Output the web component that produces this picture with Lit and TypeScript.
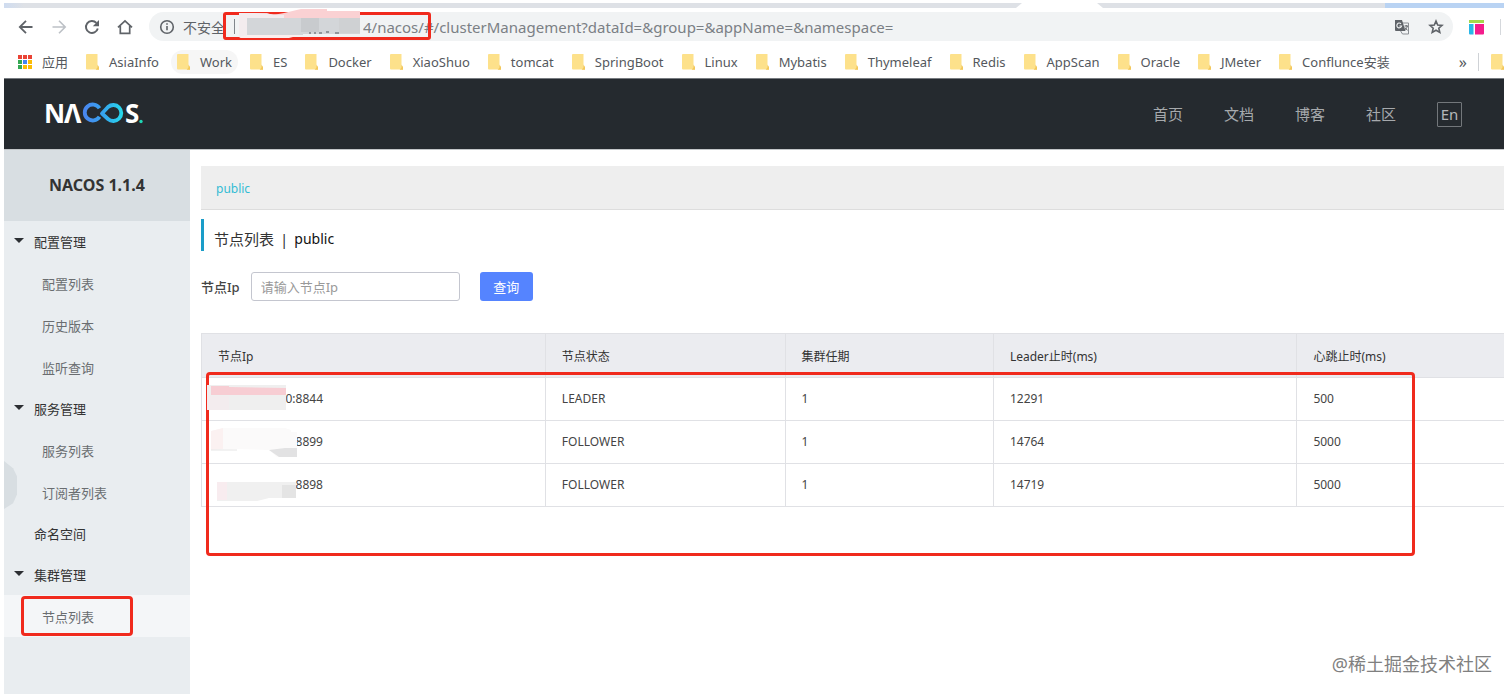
import { LitElement, html, css, svg } from "lit";
import { customElement, state } from "lit/decorators.js";

const BOOKMARKS = [
  "AsiaInfo", "Work", "ES", "Docker", "XiaoShuo", "tomcat", "SpringBoot", "Linux",
  "Mybatis", "Thymeleaf", "Redis", "AppScan", "Oracle", "JMeter", "Conflunce安装",
];

const MENU = [
  { label: "配置管理", items: ["配置列表", "历史版本", "监听查询"] },
  { label: "服务管理", items: ["服务列表", "订阅者列表"] },
  { label: "命名空间", items: [] },
  { label: "集群管理", items: ["节点列表"] },
];

const NODES = [
  { ip: "0:8844", state: "LEADER", term: 1, leader: 12291, beat: 500 },
  { ip: "8899", state: "FOLLOWER", term: 1, leader: 14764, beat: 5000 },
  { ip: "8898", state: "FOLLOWER", term: 1, leader: 14719, beat: 5000 },
];

const FONT = css`"Noto Sans", "Noto Sans CJK SC", sans-serif`;

@customElement("browser-bar")
class BrowserBar extends LitElement {
  static styles = css`
    :host { display: block; background: #fff; font-family: ${FONT}; color: #5f6368; }
    .tabs { display: flex; height: 5px; }
    .tab-left { flex: 1018; background: linear-gradient(90deg, #cfdcf0, #dee1e6 20px);
      clip-path: polygon(0 0, 100% 0, calc(100% - 6px) 100%, 0 100%); }
    .tab-open { flex: 75; }
    .tab-right { flex: 288; background: #dee1e6; clip-path: polygon(0 0, 100% 0, 100% 100%, 6px 100%); }
    .tab-end { flex: 119; background: #b9d3f3; }
    .tools { display: flex; align-items: center; height: 37px; padding-left: 13px; }
    .icon { display: block; width: 18px; height: 18px; flex: none; }
    .nav { border: 0; padding: 0; background: none; color: #5f6368; width: 18px; height: 18px; margin-right: 15px; }
    .nav.off { color: #bdc1c6; }
    .field { position: relative; flex: 1; display: flex; align-items: center; height: 29px; min-width: 0;
      border-radius: 15px; background: #f1f3f4; padding: 0 8px 0 9px; }
    .unsafe { font-size: 14px; margin-left: 7px; white-space: nowrap; }
    .sep { width: 1px; height: 15px; background: #80868b; margin-left: 9px; }
    .url { flex: 1; min-width: 0; margin-left: 128px; border: 0; padding: 0; background: none; outline: 0;
      font: 15px/24px ${FONT}; color: #7b8085; }
    .field-btn { border: 0; background: none; padding: 0; color: #5f6368; margin-left: 16px; }
    .mark { position: absolute; left: 74px; top: 0; width: 202px; height: 22px; border: 3px solid #f02a1d; border-radius: 3px; }
    .smudge { position: absolute; left: 90px; top: -3px; width: 124px; height: 31px; }
    .ext { border: 0; background: none; padding: 0; margin: 0 14px 0 15px; }
    .ext-sep { width: 1px; height: 16px; background: #d5d8dc; margin-right: 3px; }
    .marks { display: flex; align-items: center; height: 33px; padding: 0 0 0 14px; overflow: hidden; border-bottom: 1px solid #777b80; }
    .bm { display: flex; align-items: center; text-decoration: none; color: #54585d; font-size: 13px; line-height: 20px;
      white-space: nowrap; margin-right: 18px; gap: 10px; }
    .bm.hot { background: #f6f6f6; border-radius: 12px; padding: 2px 6px; margin-left: -6px; margin-right: 12px; }
    .folder { display: block; width: 13px; height: 16px; flex: none; }
    .more { border: 0; background: none; padding: 0; margin-left: auto; font: 16px/20px ${FONT}; color: #54585d; }
    .more-sep { width: 1px; height: 18px; background: #cfd2d6; margin: 0 12px 0 11px; flex: none; }
  `;

  folder() {
    return html`<svg class="folder" viewBox="0 0 13 16"><path d="M1 0h10.500v11.500l1.500 2.500v1.500H1a1 1 0 0 1-1-1V1a1 1 0 0 1 1-1z" fill="#fde18b"/><path d="M11.500 10.500v3l-1.800 2.200H13V13z" fill="#f3c85c"/></svg>`;
  }

  render() {
    const colors = ["#ea4335", "#ea4335", "#ea4335", "#34a853", "#4285f4", "#fbbc05", "#34a853", "#fbbc05", "#fbbc05"];
    return html`
      <div class="tabs"><div class="tab-left"></div><div class="tab-open"></div><div class="tab-right"></div><div class="tab-end"></div></div>
      <div class="tools">
        <button class="nav" aria-label="后退"><svg class="icon" viewBox="0 0 18 18" fill="none" stroke="currentColor" stroke-width="1.800"><path d="M15.500 9H3M9 2.800L2.800 9 9 15.200"/></svg></button>
        <button class="nav off" aria-label="前进"><svg class="icon" viewBox="0 0 18 18" fill="none" stroke="currentColor" stroke-width="1.600"><path d="M2.500 9H15M9 2.800L15.200 9 9 15.200"/></svg></button>
        <button class="nav" aria-label="刷新"><svg class="icon" viewBox="0 0 18 18" fill="none" stroke="currentColor" stroke-width="1.900"><path d="M14.800 10.500A6 6 0 1 1 13.400 4.900"/><path d="M16 2v6.200H9.800z" fill="currentColor" stroke="none"/></svg></button>
        <button class="nav" aria-label="主页"><svg class="icon" viewBox="0 0 18 18" fill="none" stroke="currentColor" stroke-width="1.700"><path d="M2 9.400L9 2.800l7 6.600M4.300 8v7.300h9.400V8"/></svg></button>
        <div class="field">
          <svg class="icon" viewBox="0 0 18 18" fill="none" stroke="#5f6368" stroke-width="1.600"><circle cx="9" cy="9" r="6.300"/><path d="M9 8v4.300M9 5.200v1.600"/></svg>
          <span class="unsafe">不安全</span><span class="sep"></span>
          <input class="url" aria-label="地址" .value=${"4/nacos/#/clusterManagement?dataId=&group=&appName=&namespace="}>
          <button class="field-btn" aria-label="翻译"><svg class="icon" viewBox="0 0 18 18"><path d="M7 5h8.500v11H9.500L7 12z" fill="#f1f3f4" stroke="#8b8f94"/><path d="M2 2h7l3.500 11H3a1 1 0 0 1-1-1z" fill="#5f6368"/><path d="M8 5.800A2.400 2.400 0 1 0 8.600 8H6.400" fill="none" stroke="#f1f3f4" stroke-width="1.100"/><path d="M11.500 8h3.500M13.200 7v1M14.300 8c-.3 2-1.500 3-2.300 3.800M12 9.500c.6 1.400 1.500 2 2.600 2.700" fill="none" stroke="#5f6368"/></svg></button>
          <button class="field-btn" aria-label="收藏"><svg class="icon" viewBox="0 0 18 18"><path d="M9 3l1.700 4 4.300.4-3.200 2.800 1 4.200L9 12.200l-3.800 2.200 1-4.200L3 7.400 7.300 7z" fill="none" stroke="#5f6368" stroke-width="1.600"/></svg></button>
          <div class="mark"></div>
          <svg class="smudge" viewBox="0 0 124 31"><path d="M0 4H28L34 6 45 4 62 0H88V2H121V24H0z" fill="#fad1d3"/><path d="M0 4H16L45 6V26H8L0 28z" fill="#f3ecee"/><path d="M8 9H121V25H64V26H8z" fill="#d3d6d9"/><path d="M62 9h18v14H62z" fill="#c8cbce"/><path d="M100 9h21v15h-21z" fill="#cfd1d3"/><path d="M3 27L13 26H62L50 29H0z" fill="#fbeeee"/><path d="M70 24h2m3 0h2m3 0h3m4-1h3m6 1h4" stroke="#7b8085" stroke-width="1.500"/></svg>
        </div>
        <button class="ext" aria-label="扩展程序"><svg class="icon" viewBox="0 0 18 18"><path d="M1 2h15v3H1z" fill="#a5d84a"/><path d="M1 6h4.500v10.500H2a1 1 0 0 1-1-1z" fill="#29b6e8"/><path d="M7 6h9v9.500a1 1 0 0 1-1 1H7z" fill="#f41c8c"/></svg></button>
        <span class="ext-sep"></span>
      </div>
      <nav class="marks">
        <a class="bm" href="#"><svg width="14" height="14" viewBox="0 0 14 14">${colors.map((c, i) => svg`<rect x=${(i % 3) * 5} y=${Math.floor(i / 3) * 5} width="4" height="4" fill=${c}/>`)}</svg>应用</a>
        ${BOOKMARKS.map((b) => html`<a class="bm ${b === "Work" ? "hot" : ""}" href="#">${this.folder()}${b}</a>`)}
        <button class="more" aria-label="更多书签">»</button><span class="more-sep"></span>${this.folder()}
      </nav>`;
  }
}

@customElement("site-header")
class SiteHeader extends LitElement {
  static styles = css`
    :host { display: flex; align-items: center; justify-content: space-between; height: 70px; padding: 0 42px 0 38px;
      background: #252a2f; font-family: ${FONT}; }
    .logo { display: block; width: 104px; height: 48px; }
    .logo-text { font: 700 26px "Noto Sans", sans-serif; fill: #fff; }
    .links { display: flex; align-items: center; gap: 41px; }
    .link { color: #a6a9ac; text-decoration: none; font-size: 15px; line-height: 24px; }
    .lang { box-sizing: border-box; width: 25px; height: 25px; padding: 0; border: 1px solid #73777b; border-radius: 1px; background: none;
      color: #b4b7ba; font: 15px/22px ${FONT}; }
  `;
  render() {
    return html`
      <svg class="logo" viewBox="0 -10 104 48" role="img" aria-label="NACOS.">
        <defs><linearGradient id="g" gradientUnits="userSpaceOnUse" x1="42" y1="0" x2="82" y2="0"><stop offset="0" stop-color="#4a86f0"/><stop offset=".5" stop-color="#35a5ee"/><stop offset="1" stop-color="#25dcea"/></linearGradient></defs>
        <text class="logo-text" x="2" y="23">N</text>
        <text class="logo-text" x="22" y="23">Λ</text>
        <path d="M57.500 17.300A8 8 0 1 1 57.500 8.700M60 14L66 7.500A8 8 0 1 1 66 19.500z" transform="translate(0 -.5)" fill="none" stroke="url(#g)" stroke-width="3.800" stroke-linejoin="round"/>
        <text class="logo-text" x="83" y="23">S</text>
        <circle cx="99" cy="21.500" r="1.700" fill="#1fd6b5"/>
      </svg>
      <nav class="links">
        ${["首页", "文档", "博客", "社区"].map((t) => html`<a class="link" href="#">${t}</a>`)}
        <button class="lang">En</button>
      </nav>`;
  }
}

@customElement("side-menu")
class SideMenu extends LitElement {
  static styles = css`
    :host { display: block; position: relative; background: #e9edf0; font-family: ${FONT}; color: #333; }
    .title { margin: 0; height: 71px; background: #d8dee2; font-size: 16px; font-weight: 700; line-height: 70px; text-align: center; }
    .list { list-style: none; margin: 0; padding: 0; }
    .parent { display: flex; align-items: center; height: 41px; color: #333; font-size: 13px; text-decoration: none; }
    .arrow { width: 10px; height: 5px; margin: 0 10px 2px; flex: none; background: #2c2f33; clip-path: polygon(0 0, 100% 0, 50% 100%); }
    .arrow.none { visibility: hidden; }
    .child { position: relative; display: flex; align-items: center; height: 42px; padding-left: 38px; color: #6a6d70; font-size: 13px; text-decoration: none; }
    .child.on { background: #f4f6f8; }
    .mark { position: absolute; left: 17px; top: 1px; width: 106px; height: 34px; border: 3px solid #f02a1d; border-radius: 4px; }
    .handle { position: absolute; left: 0; top: 311px; width: 13px; height: 48px; border: 0; padding: 0; background: #d8dee2;
      clip-path: polygon(0 0, 70% 15%, 100% 32%, 100% 70%, 70% 88%, 0 100%); }
  `;
  render() {
    return html`
      <h1 class="title">NACOS 1.1.4</h1>
      <ul class="list">
        ${MENU.map((m) => html`<li>
          <a class="parent" href="#"><span class="arrow ${m.items.length ? "" : "none"}"></span>${m.label}</a>
          <ul class="list">${m.items.map((t) => html`<li><a class="child ${t === "节点列表" ? "on" : ""}" href="#">${t}${t === "节点列表" ? html`<span class="mark"></span>` : ""}</a></li>`)}</ul>
        </li>`)}
      </ul>
      <button class="handle" aria-label="收起菜单"></button>`;
  }
}

@customElement("node-list")
class NodeTable extends LitElement {
  @state() keyword = "";
  static styles = css`
    :host { display: block; padding: 16px 0 0 11px; font-family: ${FONT}; color: #444; min-width: 0; }
    .space { background: #eee; border-bottom: 1px solid #ddd; height: 43px; padding-left: 15px; line-height: 46px; font-size: 12px; }
    .space-link { color: #33bcd4; text-decoration: none; }
    .heading { display: flex; gap: 6px; margin: 9px 0 21px; border-left: 3px solid #1a9dc9; padding: 4px 0 0 10px; height: 28px;
      font-size: 15px; font-weight: 400; line-height: 32px; color: #333; }
    .ns { font-size: 14px; color: #111; }
    .form { display: flex; align-items: center; height: 29px; margin-bottom: 32px; font-size: 13px; }
    .label { font-weight: 500; margin-right: 11px; color: #444; }
    .input { box-sizing: border-box; width: 209px; height: 29px; padding: 0 9px; border: 1px solid #c4c6cf; border-radius: 3px;
      font: 13px/20px ${FONT}; color: #333; outline: 0; }
    .input::placeholder { color: #999; }
    .submit { width: 53px; height: 29px; margin-left: 20px; padding: 0; border: 0; border-radius: 3px; background: #5584ff; color: #fff; font: 13px/20px ${FONT}; }
    .wrap { position: relative; }
    .table { width: 100%; table-layout: fixed; border-collapse: collapse; font-size: 12px; line-height: 20px; text-align: left; }
    .th, .td { box-sizing: border-box; border: 1px solid #e0e1e5; padding: 0 0 0 16px; }
    .th { height: 44px; padding-top: 2px; background: #ebecf0; font-weight: 400; color: #333; }
    .td { height: 43px; }
    .th:last-child, .td:last-child { border-right: 0; }
    .w1 { width: 26.4%; } .w2 { width: 18.4%; } .w3 { width: 16%; } .w4 { width: 23.3%; }
    .ip { display: block; width: 105px; text-align: right; }
    .mark { position: absolute; left: 5px; right: 89px; top: 39px; height: 178px; border: 3px solid #f02a1d; border-radius: 4px; }
    .smudges { position: absolute; left: 6px; top: 51px; width: 92px; height: 120px; }
  `;
  render() {
    return html`
      <div class="space"><a class="space-link" href="#">public</a></div>
      <h2 class="heading"><span>节点列表</span><span>|</span><span class="ns">public</span></h2>
      <form class="form" @submit=${(e: Event) => e.preventDefault()}>
        <label class="label" for="ip">节点Ip</label>
        <input class="input" id="ip" placeholder="请输入节点Ip" .value=${this.keyword} @input=${(e: Event) => (this.keyword = (e.target as HTMLInputElement).value)}>
        <button class="submit">查询</button>
      </form>
      <div class="wrap">
        <table class="table">
          <thead><tr><th class="th w1">节点Ip</th><th class="th w2">节点状态</th><th class="th w3">集群任期</th><th class="th w4">Leader止时(ms)</th><th class="th">心跳止时(ms)</th></tr></thead>
          <tbody>${NODES.map((n) => html`<tr><td class="td"><span class="ip">${n.ip}</span></td><td class="td">${n.state}</td><td class="td">${n.term}</td><td class="td">${n.leader}</td><td class="td">${n.beat}</td></tr>`)}</tbody>
        </table>
        <div class="mark"></div>
        <svg class="smudges" viewBox="0 0 92 120">
          <path d="M0 1H79V26H0z" fill="#efefef"/><path d="M4 2H22V3L79 4V11H4z" fill="#f7cdd3"/><path d="M0 12h22v14H0z" fill="#f3ecee"/>
          <path d="M4 47L16 44H78L84 46V48H90V73H70L62 66 30 65 4 66z" fill="#fbfafa"/><path d="M4 47L16 44V65L4 66z" fill="#fbf1f1"/><path d="M62 66L78 64H90V73H72z" fill="#e2e2e3"/><path d="M4 66h26" stroke="#e6e6e6"/>
          <path d="M10 98H89V114H62L50 117H10z" fill="#f0f0f0"/><path d="M10 98h10v18H10z" fill="#f8ecef"/><path d="M75 101h14v13H75z" fill="#e4e4e4"/>
        </svg>
      </div>`;
  }
}

@customElement("app-root")
class AppRoot extends LitElement {
  static styles = css`
    :host { display: flex; flex-direction: column; box-sizing: border-box; min-height: 100vh; padding: 3px 8px 1px 4px;
      position: relative; background: #fff; overflow: hidden; }
    .body { flex: 1; display: grid; grid-template-columns: 186px minmax(0, 1fr); border-top: 1px solid #c3c6c9; }
    .credit { position: absolute; right: 20px; bottom: 19px; font: 18px/24px ${FONT}; color: #808080; }
  `;
  render() {
    return html`
      <browser-bar></browser-bar>
      <site-header></site-header>
      <div class="body"><side-menu></side-menu><node-list></node-list></div>
      <div class="credit">@稀土掘金技术社区</div>`;
  }
}
